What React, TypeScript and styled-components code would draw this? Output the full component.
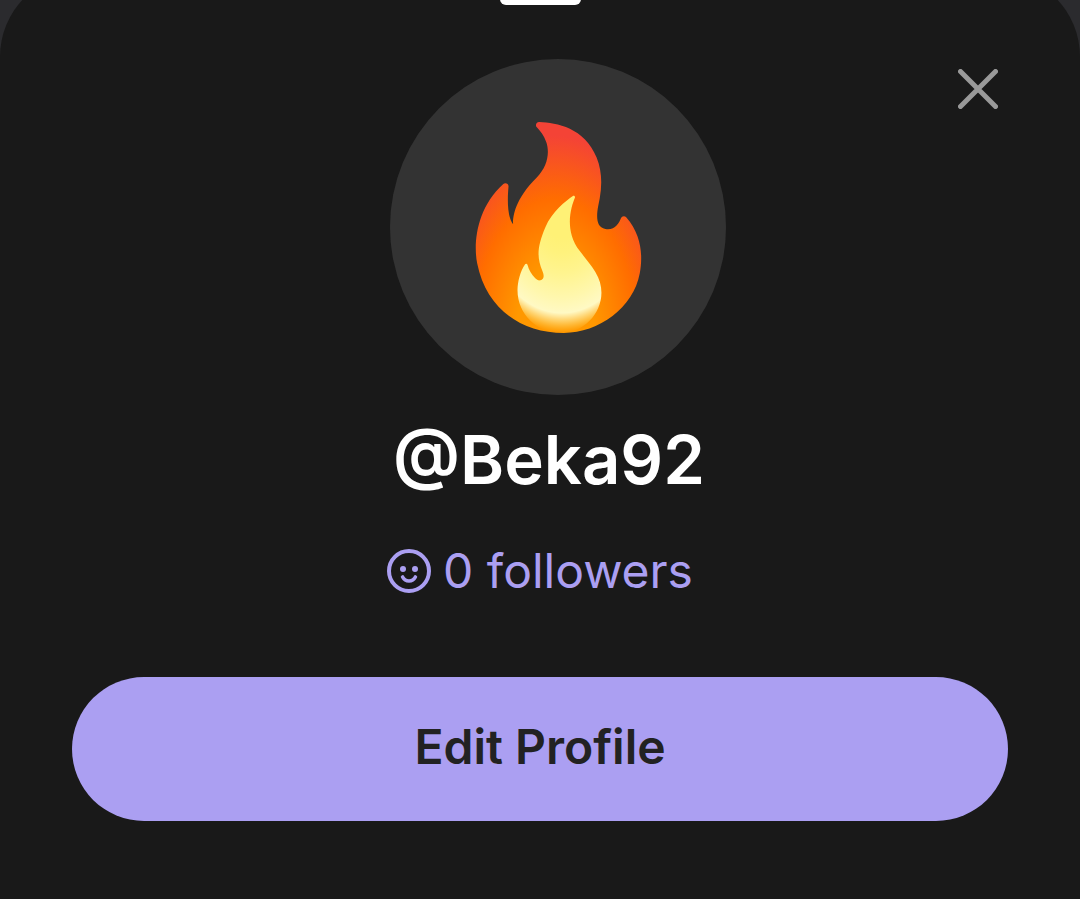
import React from "react";
import styled, { createGlobalStyle } from "styled-components";

const GlobalStyle = createGlobalStyle`
  *, *::before, *::after { box-sizing: border-box; }
  body {
    margin: 0;
    background: #2b2b2e;
    font-family: Inter, "Liberation Sans", sans-serif;
  }
`;

const Screen = styled.div`
  display: flex;
  min-height: 100vh;
  overflow: hidden;
`;

const Sheet = styled.main`
  flex: 1;
  display: flex;
  flex-direction: column;
  align-items: center;
  margin-top: -27px;
  padding: 20px 0 78px;
  border-radius: 84px 84px 0 0;
  background: #191919;
`;

const Handle = styled.div`
  width: 81px;
  height: 12px;
  border-radius: 6px;
  background: #ffffff;
`;

const Header = styled.header`
  align-self: stretch;
  display: grid;
  grid-template-columns: 1fr auto 1fr;
  align-items: start;
  margin-top: 54px;
  padding: 0 72px 0 108px;
`;

const Avatar = styled.div`
  grid-column: 2;
  display: grid;
  place-items: center;
  width: 336px;
  height: 336px;
  border-radius: 50%;
  background: #333333;
`;

const CloseButton = styled.button`
  justify-self: end;
  display: grid;
  place-items: center;
  width: 60px;
  height: 60px;
  padding: 0;
  border: 0;
  background: transparent;
  color: #999999;
  cursor: pointer;
`;

const Name = styled.h1`
  margin: 25px 0 0;
  padding-left: 18px;
  color: #ffffff;
  font-size: 67px;
  font-weight: 600;
  line-height: 80px;
`;

const Followers = styled.a`
  display: flex;
  align-items: center;
  gap: 12px;
  margin-top: 40px;
  color: #ab9ff2;
  font-size: 48px;
  font-weight: 400;
  line-height: 62px;
  text-decoration: none;
`;

const Actions = styled.div`
  align-self: stretch;
  display: flex;
  margin-top: 75px;
  padding: 0 72px;
`;

const EditButton = styled.button`
  flex: 1;
  height: 144px;
  padding: 0 0 4px;
  border: 0;
  border-radius: 72px;
  background: #ab9ff2;
  color: #222222;
  font-family: inherit;
  font-size: 48px;
  font-weight: 600;
  line-height: 62px;
  cursor: pointer;
`;

const FlameIcon = () => (
  <svg width="225" height="225" viewBox="0 0 128 128" aria-hidden="true">
    <defs>
      <radialGradient
        id="flame-outer"
        cx="68.884"
        cy="124.296"
        r="70.587"
        gradientTransform="matrix(-1 .00434 -.00713 -1.6408 131.986 328)"
        gradientUnits="userSpaceOnUse"
      >
        <stop offset=".314" stopColor="#ff9800" />
        <stop offset=".662" stopColor="#ff6d00" />
        <stop offset=".972" stopColor="#f44336" />
      </radialGradient>
      <radialGradient
        id="flame-inner"
        cx="64.921"
        cy="54.062"
        r="73.86"
        gradientTransform="matrix(-.0101 .9999 .7525 .0076 26.154 -11.267)"
        gradientUnits="userSpaceOnUse"
      >
        <stop offset=".214" stopColor="#fff176" />
        <stop offset=".328" stopColor="#fff27d" />
        <stop offset=".487" stopColor="#fff48f" />
        <stop offset=".672" stopColor="#fff7ad" />
        <stop offset=".793" stopColor="#fff9c4" />
        <stop offset=".822" stopColor="#fff8bd" stopOpacity=".804" />
        <stop offset=".863" stopColor="#fff6ab" stopOpacity=".529" />
        <stop offset=".91" stopColor="#fff38d" stopOpacity=".209" />
        <stop offset=".941" stopColor="#fff176" stopOpacity="0" />
      </radialGradient>
    </defs>
    <path
      fill="url(#flame-outer)"
      d="M35.56 40.73c-.57 6.08-.97 16.84 2.62 21.42 0 0-1.69-11.82 13.46-26.65 6.1-5.97 7.51-14.09 5.38-20.18-1.21-3.45-3.42-6.3-5.34-8.29-1.12-1.17-.26-3.1 1.37-3.03 9.86.44 25.84 3.18 32.63 20.22 2.98 7.48 3.2 15.21 1.78 23.07-.9 5.02-4.1 16.18 3.2 17.55 5.21.98 7.73-3.16 8.86-6.14.47-1.24 2.1-1.55 2.98-.56 8.8 10.01 9.55 21.8 7.73 31.95-3.52 19.62-23.39 33.9-43.13 33.9-24.66 0-44.29-14.11-49.38-39.65-2.05-10.31-1.01-30.71 14.89-45.11 1.18-1.08 3.11-.12 2.95 1.5z"
    />
    <path
      fill="url(#flame-inner)"
      d="M76.11 77.42c-9.09-11.7-5.02-25.05-2.79-30.37.3-.7-.5-1.36-1.13-.93-3.91 2.66-11.92 8.92-15.65 17.73-5.05 11.91-4.69 17.74-1.7 24.86 1.8 4.29-.29 5.2-1.34 5.36-1.02.16-1.96-.52-2.71-1.23-2.15-2.05-3.7-4.72-4.44-7.6-.16-.62-.97-.79-1.34-.28-2.8 3.87-4.25 10.08-4.32 14.47C40.47 113 51.68 124 65.24 124c17.09 0 29.54-18.9 19.72-34.7-2.85-4.6-5.53-7.61-8.85-11.88z"
    />
  </svg>
);

const CloseIcon = () => (
  <svg width="40" height="40" viewBox="0 0 40 40" aria-hidden="true">
    <path
      d="M2.5 2.5l35 35M37.5 2.5l-35 35"
      stroke="currentColor"
      strokeWidth="5"
      strokeLinecap="round"
    />
  </svg>
);

const SmileIcon = () => (
  <svg width="44" height="44" viewBox="0 0 44 44" fill="none" aria-hidden="true">
    <circle cx="22" cy="22" r="20" stroke="currentColor" strokeWidth="4" />
    <circle cx="16" cy="20" r="3" fill="currentColor" />
    <circle cx="28" cy="20" r="3" fill="currentColor" />
    <path
      d="M15.6 28c1.4 2.6 3.6 4 6.4 4s5-1.4 6.4-4"
      stroke="currentColor"
      strokeWidth="3.6"
      strokeLinecap="round"
    />
  </svg>
);

export default function App() {
  return (
    <>
      <GlobalStyle />
      <Screen>
        <Sheet>
          <Handle />
          <Header>
            <Avatar>
              <FlameIcon />
            </Avatar>
            <CloseButton type="button" aria-label="Close">
              <CloseIcon />
            </CloseButton>
          </Header>
          <Name>@Beka92</Name>
          <Followers href="#followers">
            <SmileIcon />
            <span>0 followers</span>
          </Followers>
          <Actions>
            <EditButton type="button">Edit Profile</EditButton>
          </Actions>
        </Sheet>
      </Screen>
    </>
  );
}
